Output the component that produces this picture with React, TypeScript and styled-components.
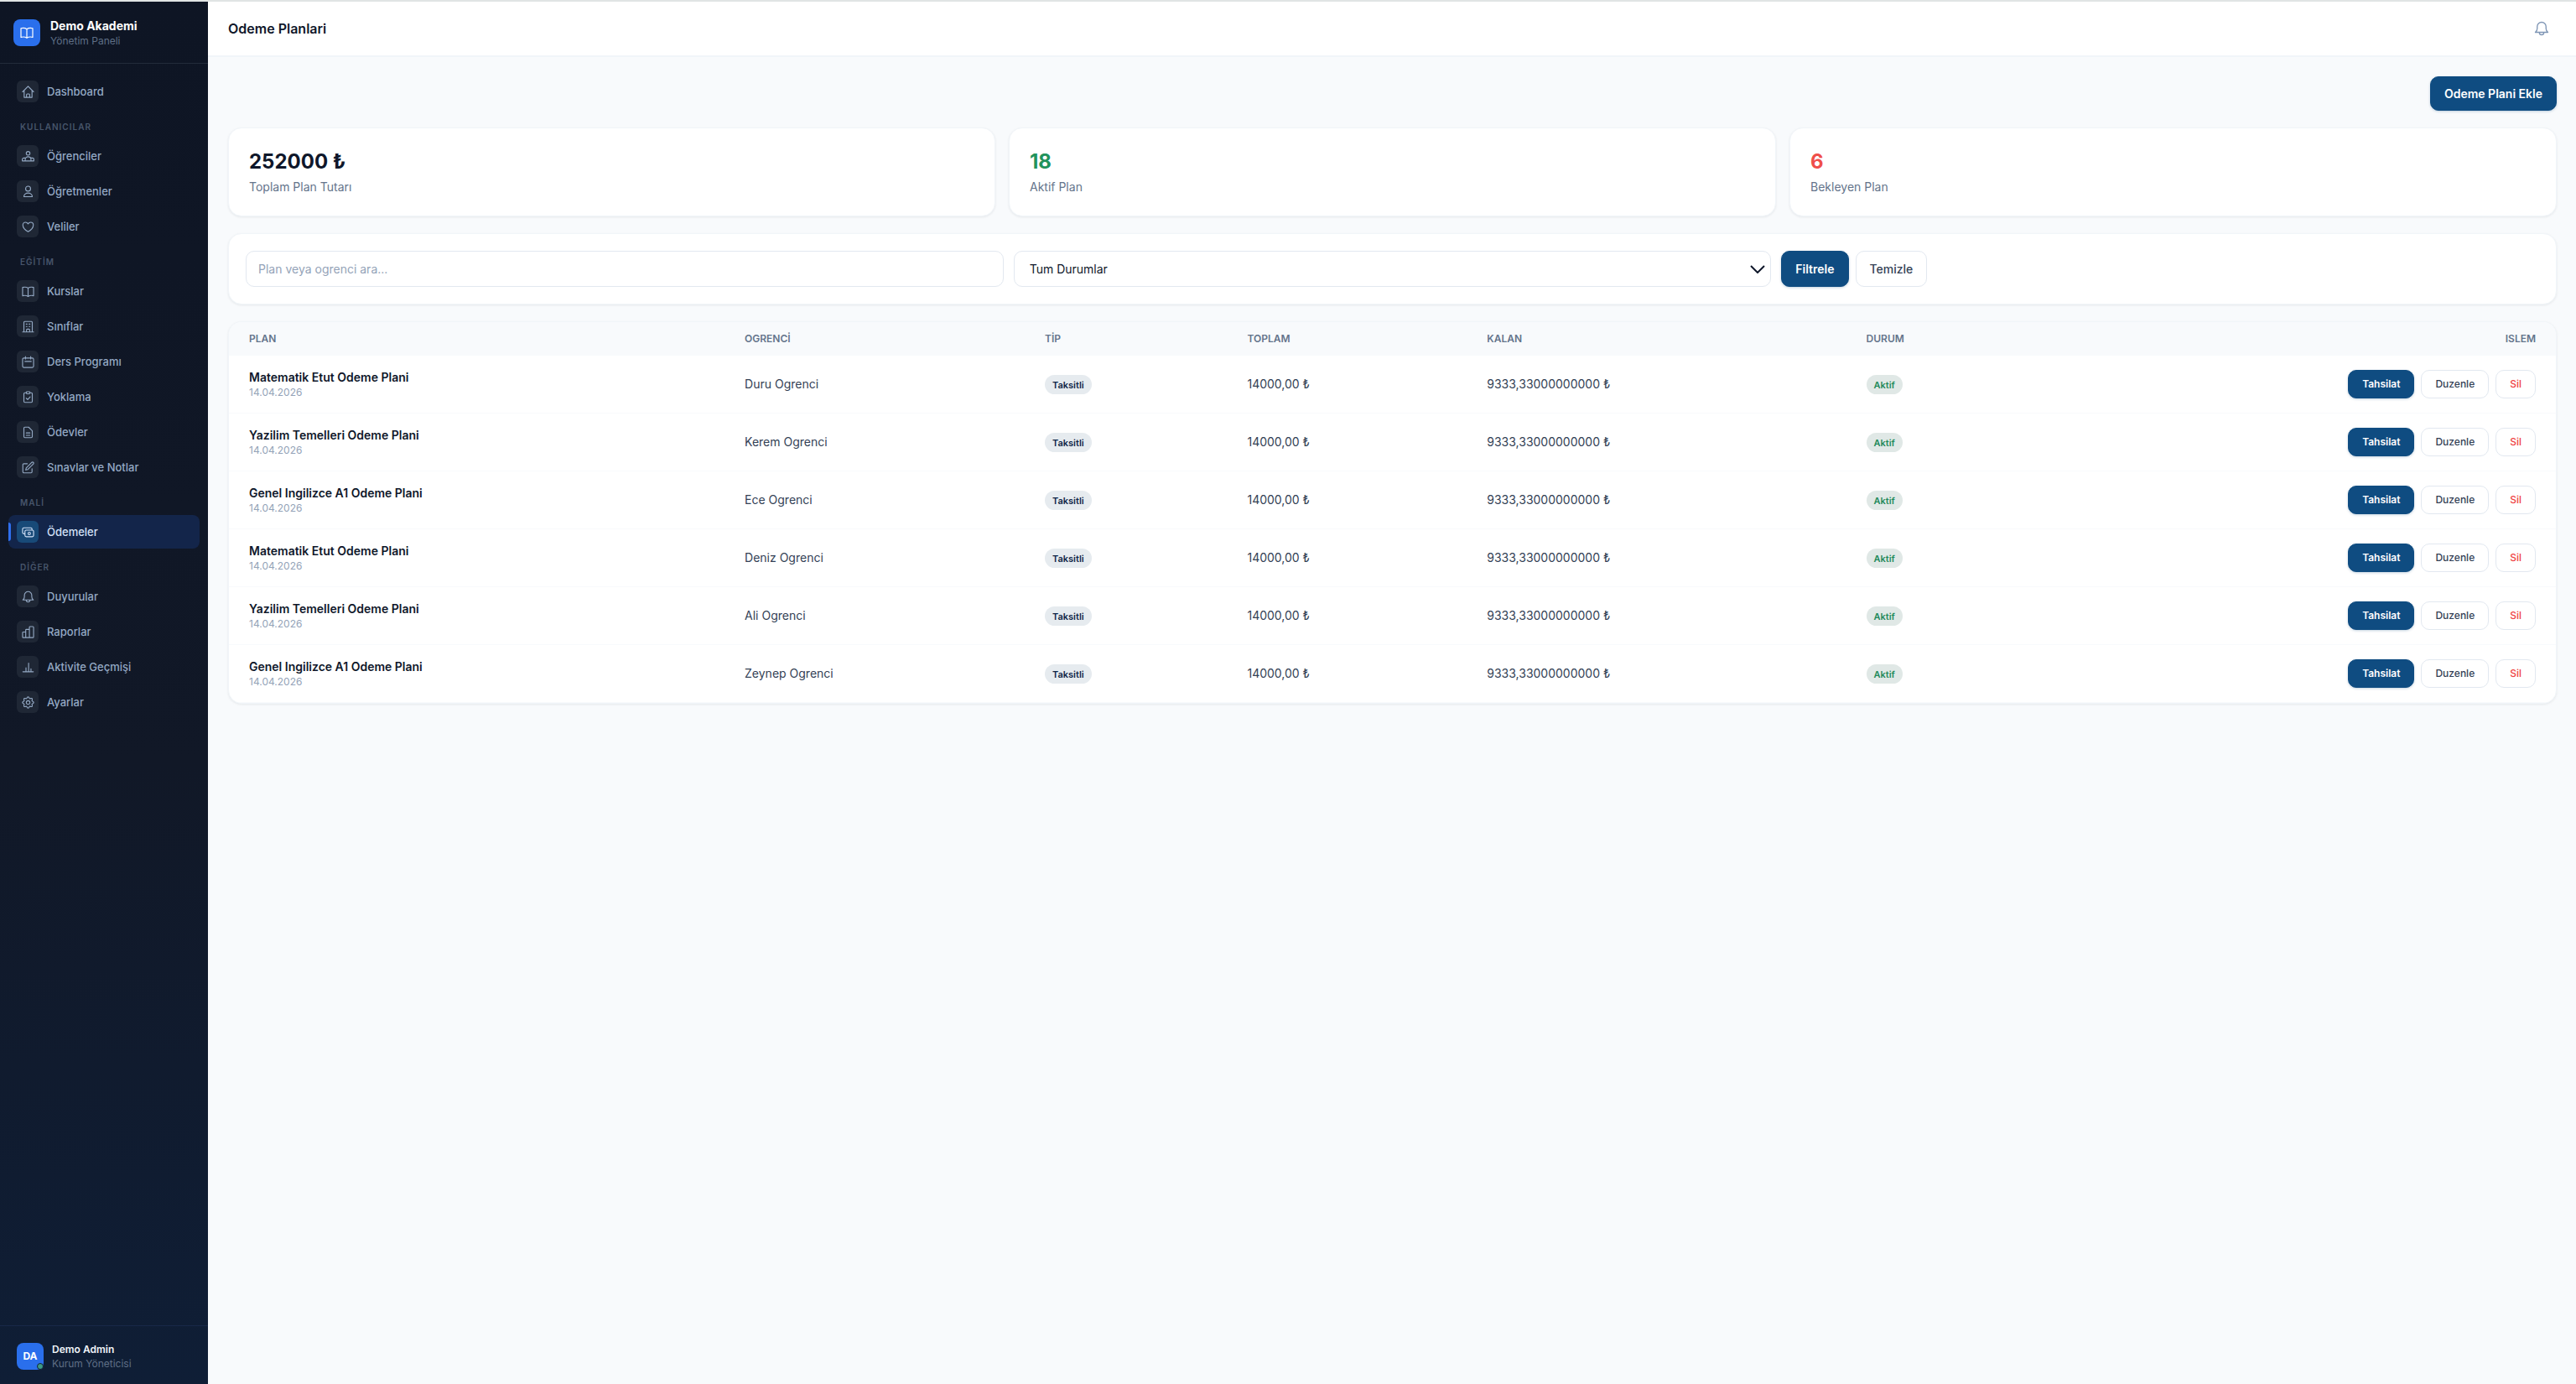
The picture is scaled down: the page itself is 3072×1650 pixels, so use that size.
import React from 'react';
import styled, { createGlobalStyle, css } from 'styled-components';

const GlobalStyle = createGlobalStyle`
  *, *::before, *::after { box-sizing: border-box; }
  body {
    margin: 0;
    background: #f8fafc;
    color: #0f172a;
    font-family: Inter, "Liberation Sans", sans-serif;
    font-size: 14px;
    line-height: 20px;
  }
  button, input, select { font: inherit; }
`;

const Shell = styled.div`
  display: flex;
  min-height: 100vh;
  border-top: 2px solid #e0e4e4;
`;

const Sidebar = styled.aside`
  display: flex;
  flex-direction: column;
  flex: 0 0 248px;
  background: linear-gradient(180deg, #0e1524 0%, #111827 55%, #0f1e36 100%);
`;

const Brand = styled.div`
  display: flex;
  align-items: center;
  gap: 12px;
  padding: 18px 16px 17px;
  border-bottom: 1px solid #222b3a;
`;

const Logo = styled.span`
  display: grid;
  place-items: center;
  width: 32px;
  height: 32px;
  border-radius: 8px;
  background: #2a6fec;
  color: #fff;
`;

const BrandText = styled.div`
  display: flex;
  flex-direction: column;
  padding-top: 2px;
  line-height: 18px;
`;

const BrandName = styled.strong`
  font-size: 14px;
  font-weight: 700;
  color: #fff;
`;

const BrandSub = styled.span`
  font-size: 12px;
  color: #5f6f86;
`;

const Nav = styled.nav`
  display: flex;
  flex-direction: column;
  flex: 1;
  padding: 13px 10px;
`;

const NavLabel = styled.h2`
  margin: 0;
  padding: 12px 14px 7px;
  font-size: 10px;
  font-weight: 600;
  line-height: 16px;
  letter-spacing: 1px;
  color: #47556b;
`;

const NavList = styled.ul`
  display: flex;
  flex-direction: column;
  margin: 0;
  padding: 0;
  list-style: none;
`;

const NavItem = styled.li`
  padding-bottom: 2px;
`;

const NavIcon = styled.span<{ $active?: boolean }>`
  display: grid;
  place-items: center;
  width: 26px;
  height: 26px;
  border-radius: 6px;
  background: ${(p) => (p.$active ? '#184a78' : '#1f2735')};
`;

const NavLink = styled.a<{ $active?: boolean }>`
  position: relative;
  display: flex;
  align-items: center;
  gap: 10px;
  height: 40px;
  padding: 0 10px;
  border-radius: 8px;
  font-size: 13px;
  font-weight: 500;
  color: #94a9c4;
  text-decoration: none;
  ${(p) =>
    p.$active &&
    css`
      background: #13254a;
      color: #d3e2f8;
      &::before {
        content: '';
        position: absolute;
        left: 0;
        top: 9px;
        width: 3px;
        height: 22px;
        border-radius: 0 3px 3px 0;
        background: #2f6fed;
      }
    `}
`;

const Account = styled.div`
  display: flex;
  align-items: center;
  gap: 10px;
  padding: 19px 20px 16px;
  border-top: 1px solid #182848;
`;

const Avatar = styled.span`
  position: relative;
  display: grid;
  place-items: center;
  width: 32px;
  height: 32px;
  border-radius: 8px;
  background: #2a6fec;
  color: #fff;
  font-size: 12px;
  font-weight: 700;
  &::after {
    content: '';
    position: absolute;
    right: 0;
    bottom: 0;
    width: 8px;
    height: 8px;
    border: 1px solid #0f2038;
    border-radius: 50%;
    background: #3d9c86;
  }
`;

const AccountText = styled.div`
  display: flex;
  flex-direction: column;
  font-size: 12px;
  line-height: 17px;
  color: #5f6f86;
`;

const AccountName = styled.strong`
  font-weight: 600;
  color: #f1f5f9;
`;

const Main = styled.main`
  display: flex;
  flex-direction: column;
  flex: 1;
  min-width: 0;
`;

const TopBar = styled.header`
  display: flex;
  align-items: center;
  justify-content: space-between;
  height: 66px;
  padding: 0 23px 0 24px;
  border-bottom: 2px solid #f1f5f9;
  background: #fff;
`;

const Title = styled.h1`
  margin: 0;
  font-size: 16px;
  font-weight: 600;
  line-height: 24px;
`;

const IconButton = styled.button`
  display: grid;
  place-items: center;
  width: 36px;
  height: 36px;
  padding: 0;
  border: 0;
  background: none;
  color: #7f96b5;
`;

const Content = styled.div`
  display: flex;
  flex-direction: column;
  gap: 20px;
  padding: 23px 23px 24px 24px;
`;

const Actions = styled.div`
  display: flex;
  justify-content: flex-end;
`;

const Button = styled.button<{ $kind?: 'primary' | 'plain' | 'danger'; $small?: boolean }>`
  padding: ${(p) => (p.$small ? '8px 16px' : '10px 16px')};
  border: 1px solid #e2e8f0;
  border-radius: 10px;
  background: #fff;
  color: #334155;
  font-size: ${(p) => (p.$small ? '12px' : '14px')};
  font-weight: 500;
  line-height: ${(p) => (p.$small ? '16px' : '19px')};
  ${(p) =>
    p.$kind === 'primary' &&
    css`
      border-color: #0f4c81;
      background: #0f4c81;
      color: #fff;
      font-weight: 600;
      box-shadow: 0 1px 3px rgba(15, 76, 129, 0.25);
    `}
  ${(p) => p.$kind === 'danger' && css`color: #ef4444;`}
`;

const cardStyle = css`
  border: 1px solid #f1f5f9;
  border-radius: 16px;
  background: #fff;
  box-shadow: 0 1px 3px rgba(15, 23, 42, 0.08);
`;

const Stats = styled.section`
  display: grid;
  grid-template-columns: repeat(3, 1fr);
  gap: 16px;
`;

const Stat = styled.div`
  ${cardStyle}
  display: flex;
  flex-direction: column;
  gap: 4px;
  padding: 24px;
`;

const StatValue = styled.strong<{ $color: string }>`
  font-size: 24px;
  font-weight: 700;
  line-height: 32px;
  color: ${(p) => p.$color};
`;

const StatLabel = styled.span`
  color: #64748b;
`;

const Filters = styled.form`
  ${cardStyle}
  display: grid;
  grid-template-columns: repeat(3, 1fr);
  gap: 12px;
  padding: 20px;
`;

const fieldStyle = css`
  width: 100%;
  height: 43px;
  border: 1px solid #e2e8f0;
  border-radius: 10px;
  background: #fff;
  color: #0f172a;
`;

const SearchField = styled.input`
  ${fieldStyle}
  padding: 0 14px;
  &::placeholder { color: #94a3b8; opacity: 1; }
`;

const SelectWrap = styled.div`
  position: relative;
`;

const SelectField = styled.select`
  ${fieldStyle}
  appearance: none;
  padding: 0 40px 0 18px;
`;

const Chevron = styled.svg`
  position: absolute;
  right: 7px;
  top: 50%;
  width: 18px;
  height: 10px;
  margin-top: -5px;
  pointer-events: none;
`;

const FilterButtons = styled.div`
  display: flex;
  gap: 8px;
`;

const TableCard = styled.section`
  ${cardStyle}
  overflow: hidden;
`;

const Table = styled.table`
  width: 100%;
  border-collapse: collapse;
  color: #334155;
`;

const HeadCell = styled.th<{ $width: string; $end?: boolean }>`
  width: ${(p) => p.$width};
  padding: 12px 24px;
  background: #f8fafc;
  text-align: ${(p) => (p.$end ? 'right' : 'left')};
  font-size: 12px;
  font-weight: 600;
  line-height: 16px;
  color: #64748b;
`;

const Row = styled.tr`
  border-bottom: 1px solid #f8fafc;
`;

const Cell = styled.td`
  padding: 16px 24px;
  white-space: nowrap;
`;

const PlanName = styled.div`
  font-weight: 600;
  color: #0f172a;
`;

const PlanDate = styled.div`
  font-size: 12px;
  line-height: 16px;
  color: #94a3b8;
`;

const Pill = styled.span<{ $green?: boolean }>`
  display: inline-block;
  padding: 4px 9px 3px;
  border-radius: 12px;
  background: ${(p) => (p.$green ? '#e0e8e6' : '#e6ebef')};
  color: ${(p) => (p.$green ? '#1f8a5b' : '#0f2547')};
  font-size: 11px;
  font-weight: 600;
  line-height: 16px;
`;

const RowActions = styled.div`
  display: flex;
  justify-content: flex-end;
  gap: 8px;
`;

const Svg = styled.svg<{ $size: number }>`
  display: block;
  width: ${(p) => p.$size}px;
  height: ${(p) => p.$size}px;
  fill: none;
  stroke: currentColor;
  stroke-width: 1.8;
  stroke-linecap: round;
  stroke-linejoin: round;
`;

// Scalloped rim with eight rounded teeth.
const gearRim = Array.from({ length: 96 }, (_, i) => {
  const angle = (i / 96) * Math.PI * 2;
  const radius = 9.4 + 1.3 * Math.cos(angle * 8);
  return `${(12 + radius * Math.cos(angle)).toFixed(2)} ${(12 + radius * Math.sin(angle)).toFixed(2)}`;
}).join('L');

const paths: Record<string, string> = {
  home: 'M1.5 12 12 1.5 22.5 12M4.5 9.5V22.5h15V9.5M9 22.5v-5a1.5 1.5 0 0 1 1.5-1.5h3a1.5 1.5 0 0 1 1.5 1.5v5',
  users: 'M12 2.5a3.5 3.5 0 1 1 0 7 3.5 3.5 0 0 1 0-7M6.5 20.5v-2.5a5.5 5.5 0 0 1 11 0v2.5zM6.5 20.5H1v-3a2.5 2.5 0 0 1 2.5-2.5h3M17.5 20.5H23v-3a2.5 2.5 0 0 0-2.5-2.5h-3',
  user: 'M12 1.5a4.75 4.75 0 1 1 0 9.5 4.75 4.75 0 0 1 0-9.5M4 21.5a8 7 0 0 1 16 0z',
  heart: 'M22 8.25c0-2.9-2.3-5-5-5-2.1 0-4 1.13-5 2.93-1-1.8-2.9-2.93-5-2.93-2.7 0-5 2.1-5 5 0 7.22 10 13 10 13s10-5.78 10-13z',
  book: 'M12 5.5C10 4 8 3.5 5.5 3.5c-1.5 0-2.6.2-4 .7v16c1.4-.5 2.5-.7 4-.7 2.5 0 4.5.5 6.5 2 2-1.5 4-2 6.5-2 1.5 0 2.6.2 4 .7v-16c-1.4-.5-2.5-.7-4-.7-2.5 0-4.5.5-6.5 2zv16',
  building: 'M1.5 22h21M4 22V3.5A1.5 1.5 0 0 1 5.5 2h13A1.5 1.5 0 0 1 20 3.5V22M8.5 7H10M8.5 11.5H10M14 7h1.5M14 11.5h1.5M9 22v-4a1.5 1.5 0 0 1 1.5-1.5h3A1.5 1.5 0 0 1 15 18v4',
  calendar: 'M7 1.5v5M17 1.5v5M1.5 7a2.5 2.5 0 0 1 2.5-2.5h16A2.5 2.5 0 0 1 22.5 7v13a2.5 2.5 0 0 1-2.5 2.5H4A2.5 2.5 0 0 1 1.5 20zM6 11h12',
  clipboard: 'M8.5 3.5H6A2 2 0 0 0 4 5.5V20a2 2 0 0 0 2 2h12a2 2 0 0 0 2-2V5.5a2 2 0 0 0-2-2h-2.5M10 1.5h4a1.5 1.5 0 0 1 1.5 1.5v.5a2 2 0 0 1-2 2h-3a2 2 0 0 1-2-2V3A1.5 1.5 0 0 1 10 1.5M8.5 14l2.75 2.75L16 11.5',
  document: 'M13 2H6a2 2 0 0 0-2 2v16a2 2 0 0 0 2 2h12a2 2 0 0 0 2-2V9zM8.5 13h7M8.5 17.5h7',
  edit: 'M18 3l1-1a2.1 2.1 0 1 1 3 3L11.5 15.5 7.5 16.5l1-4zM19.5 14v6a2 2 0 0 1-2 2H4a2 2 0 0 1-2-2V6.5a2 2 0 0 1 2-2h6.5',
  cash: 'M4.5 15h-.5a2.5 2.5 0 0 1-2.5-2.5V6A2.5 2.5 0 0 1 4 3.5h13A2.5 2.5 0 0 1 19.5 6v1.5M8.5 8H20a2.5 2.5 0 0 1 2.5 2.5v7.5A2.5 2.5 0 0 1 20 20.5H8.5A2.5 2.5 0 0 1 6 18v-7.5A2.5 2.5 0 0 1 8.5 8M14.25 12a2.25 2.25 0 1 1 0 4.5 2.25 2.25 0 0 1 0-4.5',
  bell: 'M8.5 18.5c0 2 1.5 3.5 3.5 3.5s3.5-1.5 3.5-3.5M2 18h20c-1.9-1.5-3-3.5-3-6V9A7 7 0 0 0 5 9v3c0 2.5-1.1 4.5-3 6z',
  chart: 'M1.5 13c0-.7.4-1 1-1h5v10.500h-5a1 1 0 0 1-1-1zM7.5 8c0-.7.4-1 1-1h6v15.500h-7zM14.5 7V3c0-1 .5-1.5 1.5-1.5h5c1 0 1.5.5 1.5 1.5v18a1.5 1.5 0 0 1-1.5 1.5h-6.500z',
  activity: 'M2 20.5h20M8 20.5V13M13 20.5V4M17.5 20.5V15',
  gear: `M${gearRim}ZM12 8.5a3.5 3.5 0 1 1 0 7 3.5 3.5 0 0 1 0-7`,
};

const Icon = ({ name, size = 15 }: { name: string; size?: number }) => (
  <Svg $size={size} viewBox="0 0 24 24" aria-hidden="true">
    <path d={paths[name]} />
  </Svg>
);

const groups = [
  { label: '', items: [['home', 'Dashboard']] },
  { label: 'KULLANICILAR', items: [['users', 'Öğrenciler'], ['user', 'Öğretmenler'], ['heart', 'Veliler']] },
  {
    label: 'EĞİTİM',
    items: [
      ['book', 'Kurslar'],
      ['building', 'Sınıflar'],
      ['calendar', 'Ders Programı'],
      ['clipboard', 'Yoklama'],
      ['document', 'Ödevler'],
      ['edit', 'Sınavlar ve Notlar'],
    ],
  },
  { label: 'MALİ', items: [['cash', 'Ödemeler']] },
  {
    label: 'DİĞER',
    items: [['bell', 'Duyurular'], ['chart', 'Raporlar'], ['activity', 'Aktivite Geçmişi'], ['gear', 'Ayarlar']],
  },
];

const stats = [
  { value: '252000 ₺', label: 'Toplam Plan Tutarı', color: '#0f172a' },
  { value: '18', label: 'Aktif Plan', color: '#22935c' },
  { value: '6', label: 'Bekleyen Plan', color: '#ef4f4a' },
];

const rows = [
  ['Matematik Etut Odeme Plani', 'Duru Ogrenci'],
  ['Yazilim Temelleri Odeme Plani', 'Kerem Ogrenci'],
  ['Genel Ingilizce A1 Odeme Plani', 'Ece Ogrenci'],
  ['Matematik Etut Odeme Plani', 'Deniz Ogrenci'],
  ['Yazilim Temelleri Odeme Plani', 'Ali Ogrenci'],
  ['Genel Ingilizce A1 Odeme Plani', 'Zeynep Ogrenci'],
];

const headings = [
  ['PLAN', '21.3%'],
  ['OGRENCİ', '12.9%'],
  ['TİP', '8.7%'],
  ['TOPLAM', '10.3%'],
  ['KALAN', '16.3%'],
  ['DURUM', '7.8%'],
  ['ISLEM', '22.7%'],
];

export default function App() {
  return (
    <>
      <GlobalStyle />
      <Shell>
        <Sidebar>
          <Brand>
            <Logo>
              <Icon name="book" size={16} />
            </Logo>
            <BrandText>
              <BrandName>Demo Akademi</BrandName>
              <BrandSub>Yönetim Paneli</BrandSub>
            </BrandText>
          </Brand>
          <Nav>
            {groups.map((group) => (
              <React.Fragment key={group.label}>
                {group.label && <NavLabel>{group.label}</NavLabel>}
                <NavList>
                  {group.items.map(([icon, text]) => {
                    const active = text === 'Ödemeler';
                    return (
                      <NavItem key={text}>
                        <NavLink href="#" $active={active} aria-current={active ? 'page' : undefined}>
                          <NavIcon $active={active}>
                            <Icon name={icon} />
                          </NavIcon>
                          {text}
                        </NavLink>
                      </NavItem>
                    );
                  })}
                </NavList>
              </React.Fragment>
            ))}
          </Nav>
          <Account>
            <Avatar>DA</Avatar>
            <AccountText>
              <AccountName>Demo Admin</AccountName>
              <span>Kurum Yöneticisi</span>
            </AccountText>
          </Account>
        </Sidebar>
        <Main>
          <TopBar>
            <Title>Odeme Planlari</Title>
            <IconButton type="button" aria-label="Bildirimler">
              <Icon name="bell" size={18} />
            </IconButton>
          </TopBar>
          <Content>
            <Actions>
              <Button type="button" $kind="primary">Odeme Plani Ekle</Button>
            </Actions>
            <Stats>
              {stats.map((s) => (
                <Stat key={s.label}>
                  <StatValue $color={s.color}>{s.value}</StatValue>
                  <StatLabel>{s.label}</StatLabel>
                </Stat>
              ))}
            </Stats>
            <Filters onSubmit={(e) => e.preventDefault()}>
              <SearchField type="text" aria-label="Plan veya ogrenci ara" placeholder="Plan veya ogrenci ara..." />
              <SelectWrap>
                <SelectField aria-label="Durum">
                  <option>Tum Durumlar</option>
                </SelectField>
                <Chevron viewBox="0 0 18 10" aria-hidden="true">
                  <path d="M1 1l8 8 8-8" fill="none" stroke="#0f172a" strokeWidth="2" />
                </Chevron>
              </SelectWrap>
              <FilterButtons>
                <Button type="submit" $kind="primary">Filtrele</Button>
                <Button type="reset">Temizle</Button>
              </FilterButtons>
            </Filters>
            <TableCard>
              <Table>
                <thead>
                  <tr>
                    {headings.map(([text, width]) => (
                      <HeadCell key={text} scope="col" $width={width} $end={text === 'ISLEM'}>{text}</HeadCell>
                    ))}
                  </tr>
                </thead>
                <tbody>
                  {rows.map(([plan, student]) => (
                    <Row key={student}>
                      <Cell>
                        <PlanName>{plan}</PlanName>
                        <PlanDate>14.04.2026</PlanDate>
                      </Cell>
                      <Cell>{student}</Cell>
                      <Cell><Pill>Taksitli</Pill></Cell>
                      <Cell>14000,00 ₺</Cell>
                      <Cell>9333,33000000000 ₺</Cell>
                      <Cell><Pill $green>Aktif</Pill></Cell>
                      <Cell>
                        <RowActions>
                          <Button type="button" $kind="primary" $small>Tahsilat</Button>
                          <Button type="button" $small>Duzenle</Button>
                          <Button type="button" $kind="danger" $small>Sil</Button>
                        </RowActions>
                      </Cell>
                    </Row>
                  ))}
                </tbody>
              </Table>
            </TableCard>
          </Content>
        </Main>
      </Shell>
    </>
  );
}
